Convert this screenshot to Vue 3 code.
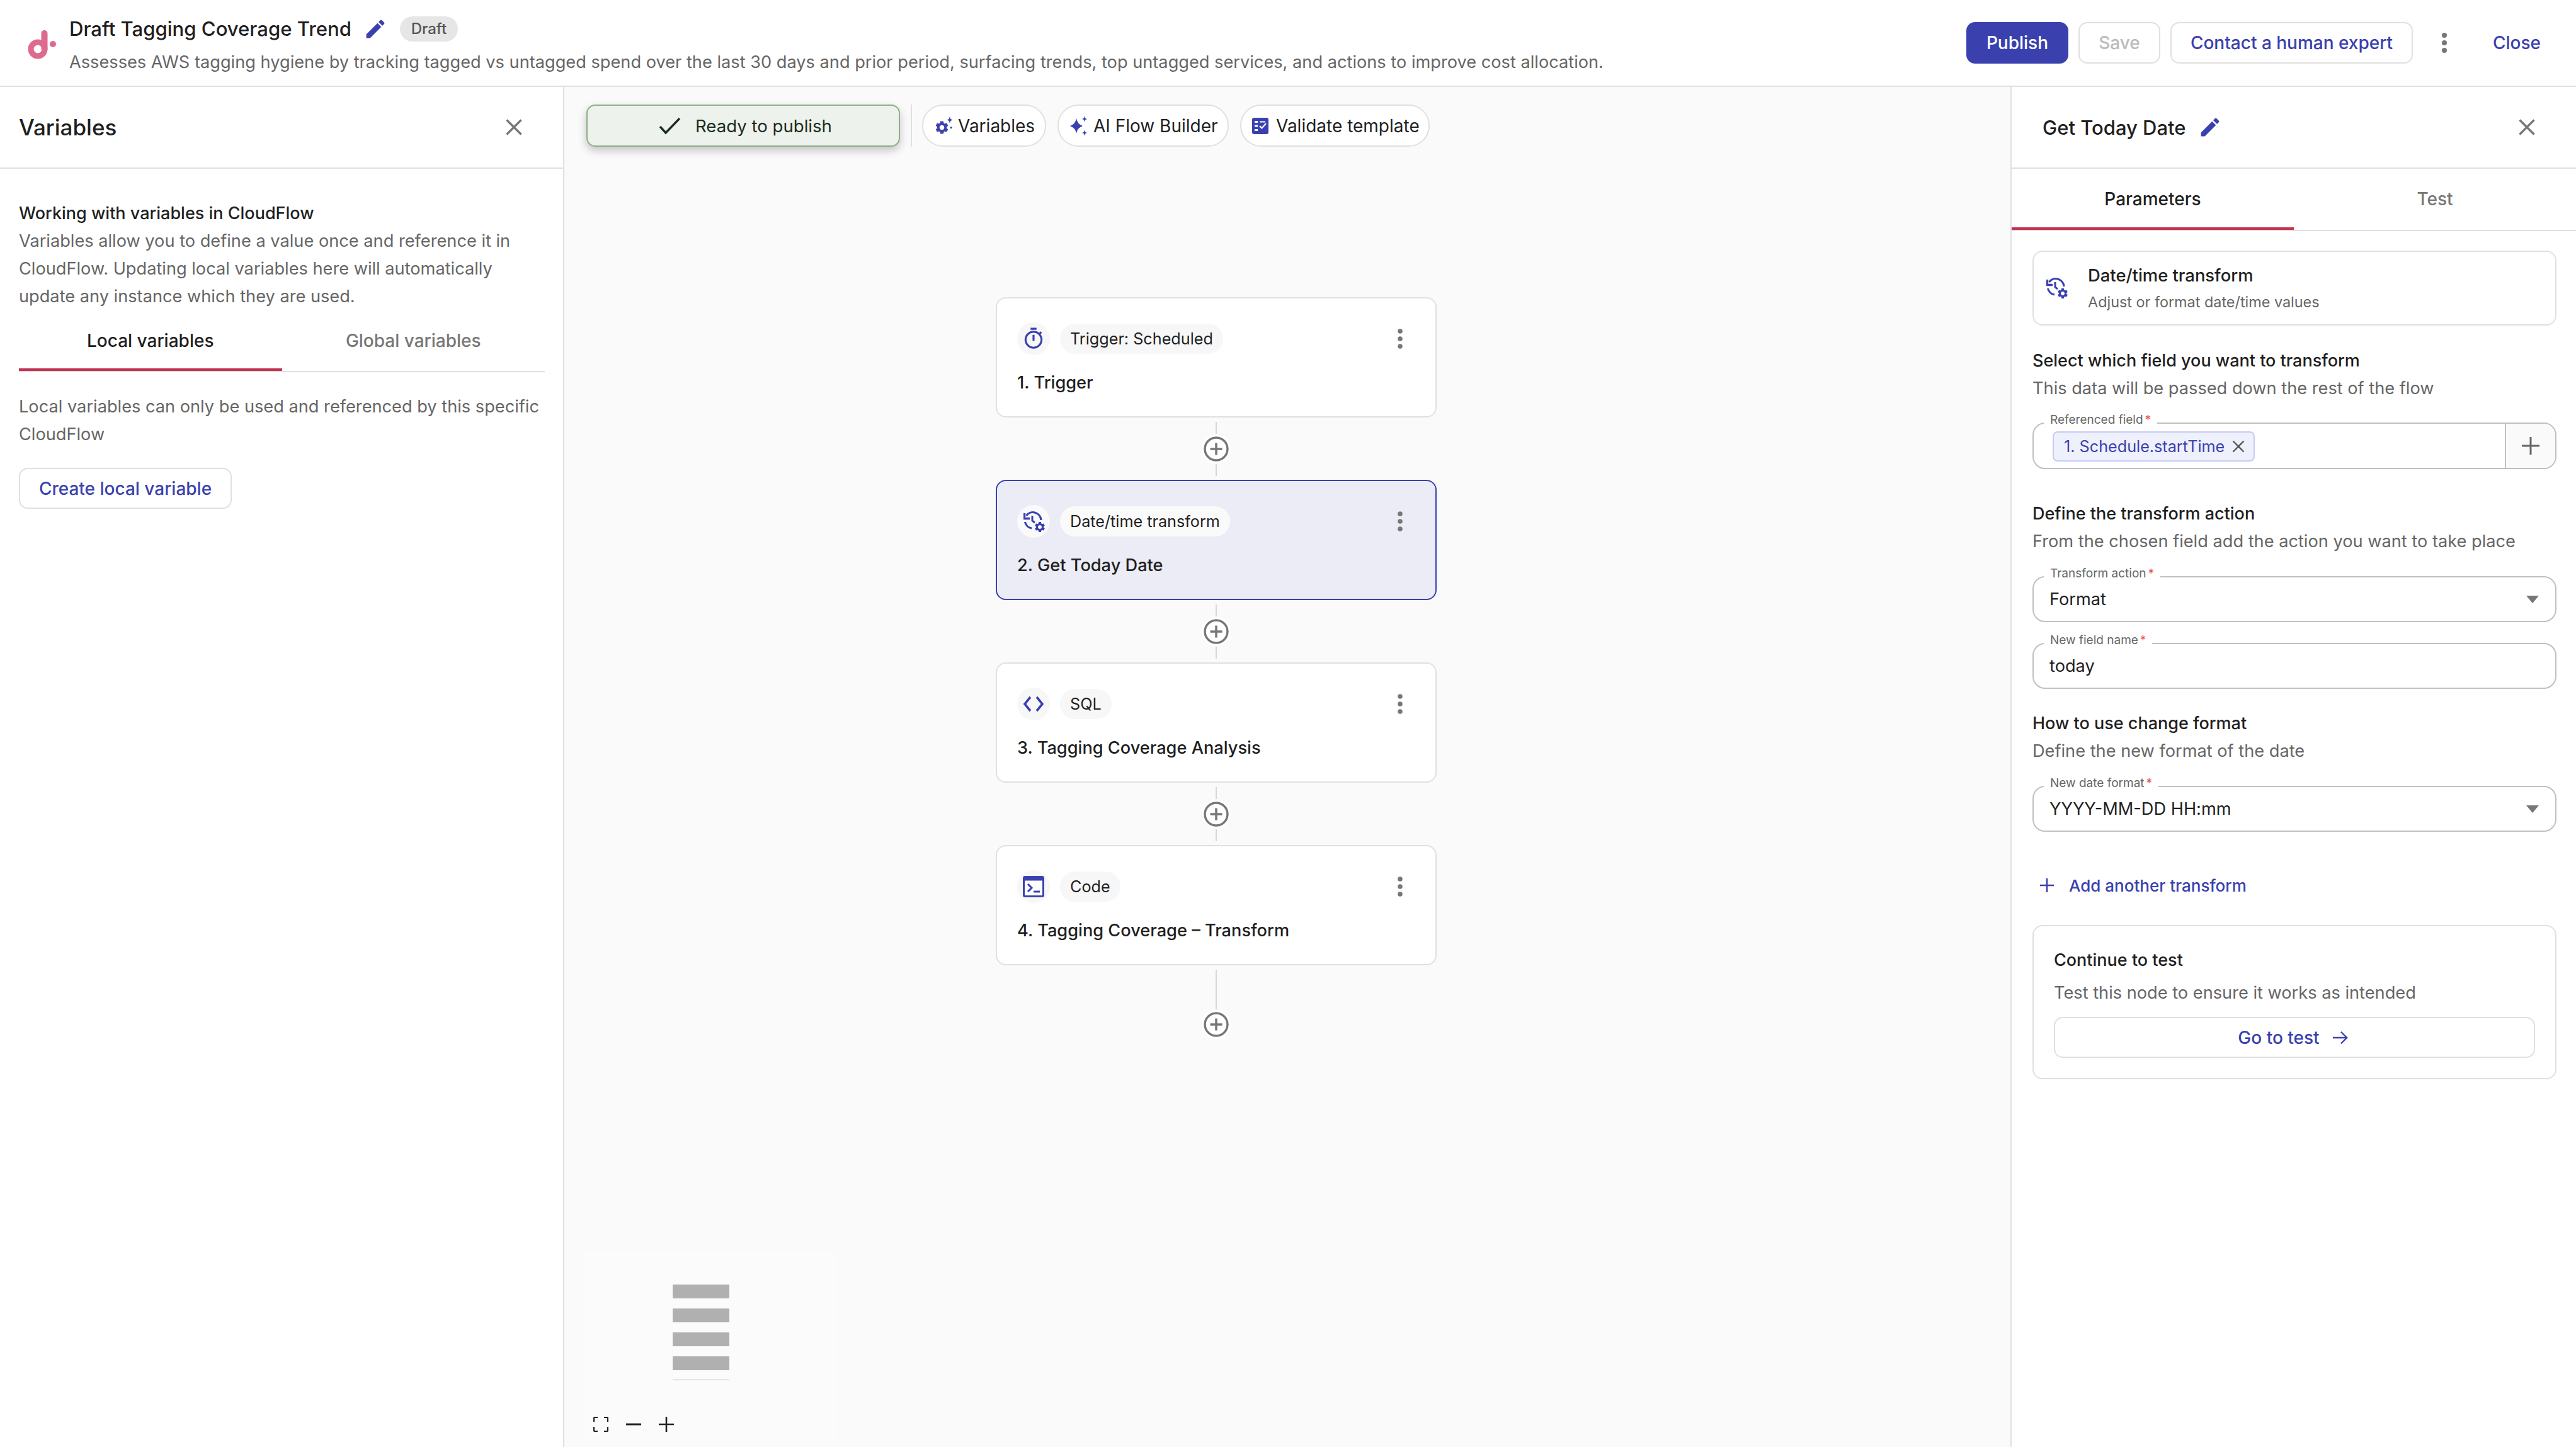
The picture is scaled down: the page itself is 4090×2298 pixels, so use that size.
<script setup>
const gear = 'M19.14 12.94c.04-.3.06-.61.06-.94 0-.32-.02-.64-.07-.94l2.03-1.58a.49.49 0 0 0 .12-.61l-1.92-3.32a.488.488 0 0 0-.59-.22l-2.39.96c-.5-.38-1.03-.7-1.62-.94l-.36-2.54a.484.484 0 0 0-.48-.41h-3.84c-.24 0-.43.17-.47.41l-.36 2.54c-.59.24-1.13.57-1.62.94l-2.39-.96c-.22-.08-.47 0-.59.22L2.74 8.87c-.12.21-.08.47.12.61l2.03 1.58c-.05.3-.09.63-.09.94s.02.64.07.94l-2.03 1.58a.49.49 0 0 0-.12.61l1.92 3.32c.12.22.37.29.59.22l2.39-.96c.5.38 1.03.7 1.62.94l.36 2.54c.05.24.24.41.48.41h3.84c.24 0 .44-.17.47-.41l.36-2.54c.59-.24 1.13-.56 1.62-.94l2.39.96c.22.08.47 0 .59-.22l1.92-3.32c.12-.22.07-.47-.12-.61l-2.01-1.58zM12 15.6c-1.98 0-3.6-1.62-3.6-3.6s1.62-3.6 3.6-3.6 3.6 1.62 3.6 3.6-1.62 3.6-3.6 3.6z'
const pencil = 'M3 17.25V21h3.75L17.81 9.94l-3.75-3.75L3 17.25zM20.71 7.04a1 1 0 0 0 0-1.41l-2.34-2.34a1 1 0 0 0-1.41 0l-1.83 1.83 3.75 3.75 1.83-1.83z'
const timer = 'M15 1H9v2h6V1zm-4 13h2V8h-2v6zm8.03-6.61l1.42-1.42c-.43-.51-.9-.99-1.41-1.41l-1.42 1.42C16.07 4.74 14.12 4 12 4c-4.97 0-9 4.03-9 9s4.02 9 9 9 9-4.03 9-9c0-2.12-.74-4.07-1.97-5.61zM12 20c-3.87 0-7-3.13-7-7s3.13-7 7-7 7 3.13 7 7-3.13 7-7 7z'
const nodes = [
  { kind: 'timer', tag: 'Trigger: Scheduled', title: '1. Trigger' },
  { kind: 'date', tag: 'Date/time transform', title: '2. Get Today Date', active: true },
  { kind: 'sql', tag: 'SQL', title: '3. Tagging Coverage Analysis' },
  { kind: 'code', tag: 'Code', title: '4. Tagging Coverage – Transform' }
]
</script>

<template>
  <div class="app">
    <header class="topbar">
      <svg class="logo" viewBox="0 0 46 46" width="46" height="46">
        <circle cx="17" cy="30" r="11" fill="none" stroke="#de6a8e" stroke-width="9" />
        <path d="M27.5 5v25" stroke="#de6a8e" stroke-width="10" stroke-linecap="round" fill="none" />
        <circle cx="41" cy="22" r="5" fill="#de6a8e" />
      </svg>
      <div class="top-text">
        <div class="top-title">
          <span class="flow-name">Draft Tagging Coverage Trend</span>
          <svg class="pencil" viewBox="2 2 20 20" width="32" height="32"><path :d="pencil" fill="#3a41ae" /></svg>
          <span class="draft">Draft</span>
        </div>
        <div class="top-desc">Assesses AWS tagging hygiene by tracking tagged vs untagged spend over the last 30 days and prior period, surfacing trends, top untagged services, and actions to improve cost allocation.</div>
      </div>
      <div class="top-actions">
        <button class="btn primary">Publish</button>
        <button class="btn disabled">Save</button>
        <button class="btn outline">Contact a human expert</button>
        <svg class="top-kebab" viewBox="0 0 10 32" width="10" height="32"><circle cx="5" cy="4" r="4" /><circle cx="5" cy="16" r="4" /><circle cx="5" cy="28" r="4" /></svg>
        <span class="close-link">Close</span>
      </div>
    </header>

    <div class="main">
      <aside class="left">
        <div class="panel-head left-head">
          <span class="panel-title">Variables</span>
          <svg class="x" viewBox="0 0 26 26" width="26" height="26"><path d="M1.5 1.5l23 23M24.5 1.5l-23 23" /></svg>
        </div>
        <div class="left-body">
          <div class="strong">Working with variables in CloudFlow</div>
          <p class="muted">Variables allow you to define a value once and reference it in CloudFlow. Updating local variables here will automatically update any instance which they are used.</p>
          <div class="tabs left-tabs">
            <div class="tab active">Local variables</div>
            <div class="tab">Global variables</div>
          </div>
          <p class="muted left-note">Local variables can only be used and referenced by this specific CloudFlow</p>
          <button class="btn outline create">Create local variable</button>
        </div>
      </aside>

      <section class="canvas">
        <div class="toolbar">
          <div class="ready">
            <svg viewBox="0 0 36 30" width="36" height="30"><path d="M2 16l9 10L33 3" fill="none" stroke="#1c2d1c" stroke-width="3.4" /></svg>
            <span>Ready to publish</span>
          </div>
          <div class="tool-div"></div>
          <div class="chip chip-vars">
            <svg viewBox="0 0 30 30" width="30" height="30">
              <svg x="0" y="5" width="25" height="25" viewBox="0 0 24 24"><path :d="gear" fill="#3a41ae" /></svg>
              <path d="M25 0l1.2 4.100L29.500 5.500l-3.300 1.400L25 11l-1.200-4.100L20.500 5.500l3.300-1.400zM27 15l.7 2 1.500.8-1.500.8-.7 2-.7-2-1.500-.8 1.500-.8z" fill="#3a41ae" />
            </svg>
            <span>Variables</span>
          </div>
          <div class="chip chip-ai">
            <svg viewBox="0 0 30 32" width="30" height="32">
              <path d="M11 4Q12.500 13 21 16 12.500 19 11 28 9.500 19 1 16 9.500 13 11 4z" fill="#3a41ae" />
              <path d="M24 0l1 3.800L28 5l-3 1.200L24 10l-1-3.800L20 5l3-1.200zM24 22l1 3.800 3 1.200-3 1.200-1 3.800-1-3.800-3-1.200 3-1.200z" fill="#3a41ae" />
            </svg>
            <span>AI Flow Builder</span>
          </div>
          <div class="chip chip-val">
            <svg viewBox="0 0 26 26" width="26" height="26">
              <rect width="26" height="26" rx="3" fill="#3a41ae" />
              <path d="M4 5h5v3H4zM4 11.500h5v3H4zM4 18h5v3H4z" fill="#fff" />
              <path d="M12 13l3.500 3.500L22 9" fill="none" stroke="#fff" stroke-width="2" />
              <path d="M12 6.500h9" stroke="#fff" stroke-width="2" />
            </svg>
            <span>Validate template</span>
          </div>
        </div>

        <div class="flow">
          <template v-for="(n, i) in nodes" :key="n.title">
            <article class="node" :class="{ selected: n.active }">
              <div class="node-top">
                <div class="node-icon">
                  <svg v-if="n.kind === 'timer'" viewBox="0 0 24 24" width="38" height="38"><path :d="timer" fill="#3a41ae" /></svg>
                  <svg v-else-if="n.kind === 'date'" class="date-ic" viewBox="0 0 36 36" width="36" height="36">
                    <path d="M4.500 8A13 13 0 0 1 28 15M2.500 18A13 13 0 0 0 13 28" fill="none" stroke="#3a41ae" stroke-width="3.200" />
                    <path d="M1.500 4v8.500H10" fill="none" stroke="#3a41ae" stroke-width="3.400" />
                    <path d="M14 8v8l4 3" fill="none" stroke="#3a41ae" stroke-width="3" />
                    <svg x="16" y="16" width="20" height="20" viewBox="0 0 24 24"><path :d="gear" fill="#3a41ae" /></svg>
                  </svg>
                  <svg v-else-if="n.kind === 'sql'" viewBox="0 0 34 26" width="34" height="26"><path d="M12 2L3 13l9 11M22 2l9 11-9 11" fill="none" stroke="#3a41ae" stroke-width="3.600" /></svg>
                  <svg v-else viewBox="0 0 34 34" width="34" height="34">
                    <rect x="1.500" y="1.500" width="31" height="31" rx="2" fill="#fff" stroke="#3a41ae" stroke-width="3" />
                    <rect x="1.500" y="1.500" width="31" height="6" fill="#3a41ae" />
                    <path d="M8 13l6 6-6 6" fill="none" stroke="#3a41ae" stroke-width="3" />
                    <path d="M17 25h10" stroke="#3a41ae" stroke-width="3" />
                  </svg>
                </div>
                <div class="node-tag">{{ n.tag }}</div>
                <svg class="node-kebab" viewBox="0 0 8 32" width="8" height="32"><circle cx="4" cy="4" r="3.800" /><circle cx="4" cy="16" r="3.800" /><circle cx="4" cy="28" r="3.800" /></svg>
              </div>
              <div class="node-title">{{ n.title }}</div>
            </article>
            <div class="conn" :class="{ last: i === nodes.length - 1 }">
              <span class="seg top"></span>
              <svg class="add" viewBox="0 0 40 40" width="40" height="40">
                <circle cx="20" cy="20" r="18" fill="#fff" stroke="#777" stroke-width="3.500" />
                <path d="M20 10.500v19M10.500 20h19" stroke="#777" stroke-width="3.500" />
              </svg>
              <span v-if="i < nodes.length - 1" class="seg"></span>
            </div>
          </template>
        </div>

        <div class="minimap">
          <div class="mini-bars">
            <span></span><span></span><span></span><span></span><i></i>
          </div>
          <div class="mini-ctrl">
            <svg viewBox="0 0 24 24" width="24" height="24"><path d="M1 8V2.500Q1 1 2.500 1H7M17 1h4.500Q23 1 23 2.500V8M23 16v5.500q0 1.500-1.500 1.500H17M7 23H2.500Q1 23 1 21.500V16" fill="none" stroke="#222" stroke-width="2.200" /></svg>
            <svg viewBox="0 0 24 24" width="24" height="24"><path d="M0 12h24" stroke="#222" stroke-width="3" /></svg>
            <svg viewBox="0 0 24 24" width="24" height="24"><path d="M0 12h24M12 0v24" stroke="#222" stroke-width="2.600" /></svg>
          </div>
        </div>
      </section>

      <aside class="right">
        <div class="panel-head right-head">
          <span class="right-title">Get Today Date</span>
          <svg class="pencil" viewBox="2 2 20 20" width="32" height="32"><path :d="pencil" fill="#3a41ae" /></svg>
          <svg class="x right-x" viewBox="0 0 26 26" width="26" height="26"><path d="M1.500 1.500l23 23M24.500 1.500l-23 23" /></svg>
        </div>
        <div class="tabs right-tabs">
          <div class="tab active">Parameters</div>
          <div class="tab">Test</div>
        </div>
        <div class="right-body">
          <div class="type-card">
            <svg viewBox="0 0 36 36" width="36" height="36">
              <path d="M4.500 8A13 13 0 0 1 28 15M2.500 18A13 13 0 0 0 13 28" fill="none" stroke="#3a41ae" stroke-width="3.200" />
              <path d="M1.500 4v8.500H10" fill="none" stroke="#3a41ae" stroke-width="3.400" />
              <path d="M14 8v8l4 3" fill="none" stroke="#3a41ae" stroke-width="3" />
              <svg x="16" y="16" width="20" height="20" viewBox="0 0 24 24"><path :d="gear" fill="#3a41ae" /></svg>
            </svg>
            <div>
              <div class="type-title">Date/time transform</div>
              <div class="type-sub">Adjust or format date/time values</div>
            </div>
          </div>

          <div class="sec-title s1">Select which field you want to transform</div>
          <div class="sec-sub">This data will be passed down the rest of the flow</div>
          <div class="field ref">
            <label>Referenced field<b>*</b></label>
            <div class="ref-main">
              <span class="tag">1. Schedule.startTime
                <svg viewBox="0 0 20 20" width="20" height="20"><path d="M1.500 1.500l17 17M18.500 1.500l-17 17" stroke="#555" stroke-width="2.400" /></svg>
              </span>
            </div>
            <div class="ref-add"><svg viewBox="0 0 28 28" width="28" height="28"><path d="M0 14h28M14 0v28" stroke="#666" stroke-width="3" /></svg></div>
          </div>

          <div class="sec-title s2">Define the transform action</div>
          <div class="sec-sub">From the chosen field add the action you want to take place</div>
          <div class="field sel f1">
            <label>Transform action<b>*</b></label>
            <span>Format</span><i class="caret"></i>
          </div>
          <div class="field sel f2">
            <label>New field name<b>*</b></label>
            <span>today</span>
          </div>

          <div class="sec-title s3">How to use change format</div>
          <div class="sec-sub">Define the new format of the date</div>
          <div class="field sel f1">
            <label>New date format<b>*</b></label>
            <span>YYYY-MM-DD HH:mm</span><i class="caret"></i>
          </div>

          <div class="add-row">
            <svg viewBox="0 0 22 22" width="22" height="22"><path d="M0 11h22M11 0v22" stroke="#3a41ae" stroke-width="2.600" /></svg>
            <span>Add another transform</span>
          </div>

          <div class="test-card">
            <div class="strong">Continue to test</div>
            <div class="muted test-sub">Test this node to ensure it works as intended</div>
            <button class="btn outline go">Go to test
              <svg viewBox="0 0 26 24" width="24" height="24"><path d="M0 12h24M14 2l10 10-10 10" fill="none" stroke="#3a41ae" stroke-width="2.600" /></svg>
            </button>
          </div>
        </div>
      </aside>
    </div>
  </div>
</template>

<style>
html, body { margin: 0; padding: 0; background: #fff; }
</style>

<style scoped>
.app { width: 4090px; height: 2298px; display: flex; flex-direction: column; overflow: hidden; background: #fff; font-family: Inter, "Liberation Sans", sans-serif; color: #1f1f1f; font-size: 27.2px; }
p { margin: 0; }
button { font-family: inherit; }

.topbar { height: 138px; box-sizing: border-box; border-bottom: 2px solid #e0e0e0; display: flex; align-items: center; padding: 0 56px 0 43px; flex: none; }
.logo { flex: none; margin: 6px 21px 0 0; }
.top-text { flex: 1; margin-top: 2px; }
.top-title { display: flex; align-items: center; height: 40px; margin-top: 6px; }
.flow-name { font-size: 31.1px; font-weight: 500; line-height: 40px; }
.pencil { flex: none; }
.top-title .pencil { margin-left: 22px; }
.draft { margin-left: 23px; height: 40px; width: 92px; border-radius: 20px; background: #e6e6e6; color: #555; font-size: 24px; font-weight: 500; line-height: 40px; text-align: center; }
.top-desc { color: #666; font-size: 27.2px; line-height: 40px; margin-top: 13px; white-space: nowrap; }
.top-actions { display: flex; align-items: center; flex: none; }

.btn { box-sizing: border-box; height: 66px; border-radius: 14px; border: 2px solid #e0e0e0; background: #fff; font-size: 28px; font-weight: 500; color: #3a41ae; padding: 0; }
.primary { width: 162px; background: #3a41ae; border-color: #3a41ae; color: #fff; }
.disabled { width: 130px; margin-left: 16px; color: #bbb; }
.top-actions .outline { width: 385px; margin-left: 16px; }
.top-kebab { margin-left: 45px; fill: #777; }
.close-link { margin-left: 72px; color: #3a41ae; font-size: 28px; font-weight: 500; }

.main { flex: 1; display: flex; min-height: 0; }
.panel-head { box-sizing: border-box; height: 130px; border-bottom: 2px solid #e0e0e0; display: flex; align-items: center; flex: none; }
.x { fill: none; stroke: #777; stroke-width: 3.4; flex: none; }

.left { width: 896px; box-sizing: border-box; border-right: 2px solid #e0e0e0; flex: none; }
.left-head { justify-content: space-between; padding: 0 65px 0 30px; }
.panel-title { font-size: 35px; font-weight: 500; }
.left-body { padding: 49px 29px 0 30px; }
.strong { font-size: 27px; font-weight: 500; line-height: 44px; }
.muted { color: #666; font-size: 27.2px; line-height: 44px; }

.tabs { display: flex; border-bottom: 2px solid #e0e0e0; }
.tab { flex: 1; box-sizing: border-box; text-align: center; font-size: 28px; font-weight: 500; line-height: 44px; color: #777; position: relative; }
.tab.active { color: #1f1f1f; }
.tab.active::after { content: ""; position: absolute; left: 0; right: 0; bottom: 0; height: 4px; background: #c4304f; }
.left-tabs { margin-top: 4px; }
.left-tabs .tab { height: 92px; padding-top: 22px; }
.left-note { margin-top: 33px; }
.create { display: block; width: 338px; height: 65px; margin-top: 31px; }

.canvas { flex: 1; background: #fafafa; position: relative; min-width: 0; }
.toolbar { display: flex; align-items: center; height: 67px; margin: 28px 0 0 35px; }
.ready { box-sizing: border-box; width: 498px; height: 67px; border: 2px solid #8fb08a; border-radius: 14px; background: #edf2ec; display: flex; align-items: center; padding-left: 113px; gap: 22px; color: #1c2d1c; box-shadow: 0 6px 14px rgba(0,0,0,.22); font-size: 27.6px; }
.tool-div { width: 2px; height: 67px; background: #e0e0e0; margin: 0 16px 0 17px; }
.chip { box-sizing: border-box; height: 67px; border-radius: 33px; border: 2px solid #e0e0e0; background: #fff; display: flex; align-items: center; gap: 8px; font-size: 28px; padding-left: 17px; }
.chip-vars { width: 197px; }
.chip-ai { width: 272px; margin-left: 18px; }
.chip-val { width: 301px; margin-left: 18px; gap: 12px; }

.flow { width: 700px; margin: 239px 0 0 685px; display: flex; flex-direction: column; }
.node { box-sizing: border-box; height: 191px; border: 2px solid #e0e0e0; border-radius: 16px; background: #fff; padding: 0 32px; flex: none; }
.node.selected { background: #ebecf5; border-color: #3a41ae; }
.node-top { display: flex; align-items: center; margin-top: 38px; height: 52px; }
.node-icon { width: 52px; height: 52px; border-radius: 50%; background: #f7f7f7; display: flex; align-items: center; justify-content: center; flex: none; }
.date-ic { margin: 2px 0 0 4px; }
.selected .node-icon, .selected .node-tag { background: #fafafa; }
.node-tag { margin-left: 16px; height: 48px; border-radius: 24px; background: #f7f7f7; padding: 0 16px; font-size: 25.2px; line-height: 48px; }
.node-kebab { margin-left: auto; margin-right: 20px; fill: #777; flex: none; }
.node-title { font-size: 27.2px; font-weight: 500; line-height: 44px; margin-top: 22px; }

.conn { height: 99px; display: flex; flex-direction: column; align-items: center; padding-top: 7px; box-sizing: border-box; flex: none; }
.seg { display: block; width: 2px; height: 19px; background: #d6d6d6; flex: none; }
.conn .add { flex: none; margin: 4px 0; border-radius: 50%; box-shadow: 0 0 0 3px #fff; }
.conn.last { height: 120px; }
.conn.last .seg.top { height: 63px; }

.minimap { position: absolute; left: 32px; bottom: 10px; width: 399px; height: 300px; background: #fbfbfb; }
.mini-bars { position: absolute; left: 140px; top: 52px; width: 90px; display: flex; flex-direction: column; }
.mini-bars span { height: 22px; background: #b0b0b0; border-radius: 1px; margin-bottom: 16px; }
.mini-bars i { display: block; height: 1px; background: #b0b0b0; margin-top: -1px; }
.mini-ctrl { position: absolute; left: 14px; top: 262px; display: flex; gap: 28px; }

.right { width: 898px; flex: none; box-sizing: border-box; border-left: 2px solid #e0e0e0; }
.right-head { padding: 0 65px 0 49px; }
.right-title { font-size: 31px; font-weight: 500; }
.right-head .pencil { margin-left: 22px; }
.right-x { margin-left: auto; }
.right-tabs .tab { height: 97px; padding-top: 26px; }
.right-body { padding: 31px 31px 0 33px; }
.type-card { box-sizing: border-box; height: 119px; border: 2px solid #e0e0e0; border-radius: 16px; display: flex; align-items: center; padding-left: 20px; gap: 30px; }
.type-title { font-size: 27.4px; font-weight: 500; line-height: 40px; }
.type-sub { color: #666; font-size: 23.4px; line-height: 36px; margin-top: 5px; }
.sec-title { font-size: 27px; font-weight: 500; line-height: 44px; }
.sec-sub { color: #666; font-size: 27.2px; line-height: 44px; }
.s1 { margin-top: 34px; }
.s2 { margin-top: 49px; }
.s3 { margin-top: 33px; }

.field { box-sizing: border-box; border: 2px solid #c0c0c0; border-radius: 20px; position: relative; }
.field label { position: absolute; left: 16px; top: -18px; background: #fff; padding: 0 10px; font-size: 19px; line-height: 24px; color: #666; white-space: nowrap; }
.field label b { color: #e5484d; font-weight: 400; margin-left: 3px; }
.ref { height: 74px; margin-top: 32px; display: flex; overflow: visible; }
.ref-main { flex: 1; display: flex; align-items: center; padding-left: 30px; }
.tag { box-sizing: border-box; height: 48px; width: 321px; margin-top: 2px; border: 2px solid #c5cbf5; border-radius: 8px; background: #eef0fb; color: #3a41ae; font-size: 25.2px; display: flex; align-items: center; justify-content: space-between; padding: 0 14px 0 16px; }
.ref-add { width: 78px; border-left: 2px solid #c0c0c0; background: #fafafa; border-radius: 0 18px 18px 0; display: flex; align-items: center; justify-content: center; }
.sel { height: 73px; display: flex; align-items: center; padding-left: 25px; font-size: 27.2px; }
.f1 { margin-top: 33px; }
.f2 { margin-top: 33px; }
.caret { width: 0; height: 0; border-left: 10px solid transparent; border-right: 10px solid transparent; border-top: 12px solid #777; margin-left: auto; margin-right: 26px; }
.add-row { display: flex; align-items: center; gap: 24px; margin: 63px 0 0 12px; height: 44px; color: #3a41ae; font-size: 26px; font-weight: 500; }
.test-card { box-sizing: border-box; height: 245px; margin-top: 41px; border: 2px solid #e0e0e0; border-radius: 16px; padding: 32px 32px 0; }
.test-sub { margin-top: 8px; }
.go { width: 100%; height: 65px; margin-top: 16px; display: flex; align-items: center; justify-content: center; gap: 21px; padding-right: 5px; }
</style>
